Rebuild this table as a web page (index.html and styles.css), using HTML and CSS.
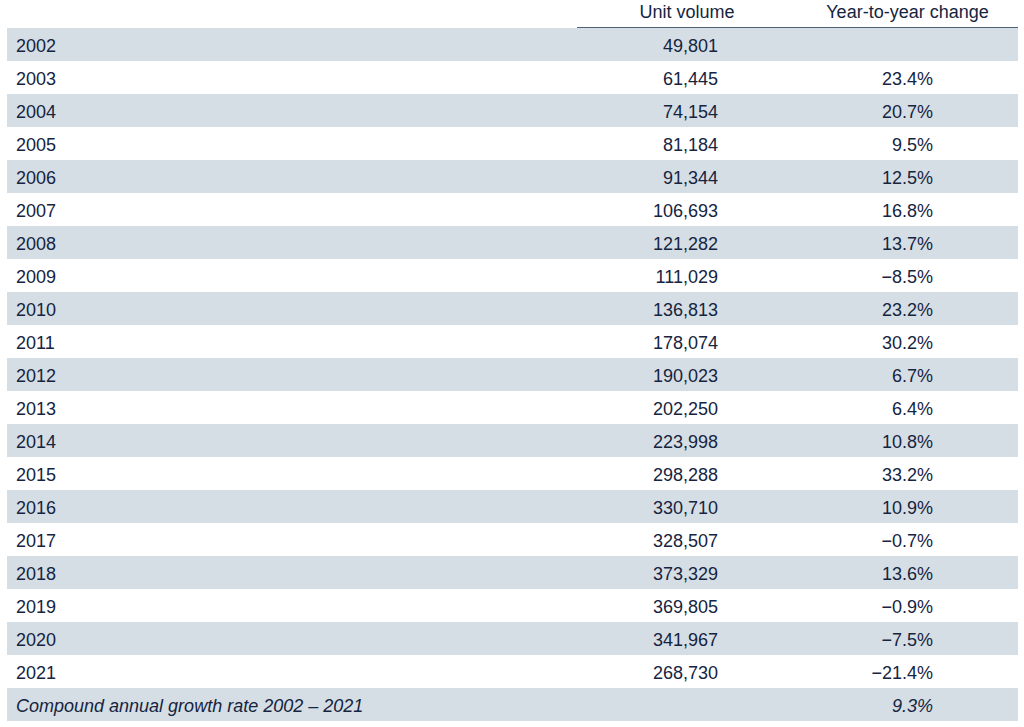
FILE: index.html
```html
<!DOCTYPE html>
<html lang="en">
<head>
<meta charset="utf-8">
<title>Unit volume</title>
<link rel="stylesheet" href="styles.css">
</head>
<body>
<table class="data">
  <colgroup>
    <col class="c-year">
    <col class="c-vol">
    <col class="c-chg">
  </colgroup>
  <thead>
    <tr>
      <th class="blank"></th>
      <th>Unit volume</th>
      <th>Year-to-year change</th>
    </tr>
  </thead>
  <tbody>
    <tr><td>2002</td><td class="vol">49,801</td><td class="chg"></td></tr>
    <tr><td>2003</td><td class="vol">61,445</td><td class="chg">23.4%</td></tr>
    <tr><td>2004</td><td class="vol">74,154</td><td class="chg">20.7%</td></tr>
    <tr><td>2005</td><td class="vol">81,184</td><td class="chg">9.5%</td></tr>
    <tr><td>2006</td><td class="vol">91,344</td><td class="chg">12.5%</td></tr>
    <tr><td>2007</td><td class="vol">106,693</td><td class="chg">16.8%</td></tr>
    <tr><td>2008</td><td class="vol">121,282</td><td class="chg">13.7%</td></tr>
    <tr><td>2009</td><td class="vol">111,029</td><td class="chg">&minus;8.5%</td></tr>
    <tr><td>2010</td><td class="vol">136,813</td><td class="chg">23.2%</td></tr>
    <tr><td>2011</td><td class="vol">178,074</td><td class="chg">30.2%</td></tr>
    <tr><td>2012</td><td class="vol">190,023</td><td class="chg">6.7%</td></tr>
    <tr><td>2013</td><td class="vol">202,250</td><td class="chg">6.4%</td></tr>
    <tr><td>2014</td><td class="vol">223,998</td><td class="chg">10.8%</td></tr>
    <tr><td>2015</td><td class="vol">298,288</td><td class="chg">33.2%</td></tr>
    <tr><td>2016</td><td class="vol">330,710</td><td class="chg">10.9%</td></tr>
    <tr><td>2017</td><td class="vol">328,507</td><td class="chg">&minus;0.7%</td></tr>
    <tr><td>2018</td><td class="vol">373,329</td><td class="chg">13.6%</td></tr>
    <tr><td>2019</td><td class="vol">369,805</td><td class="chg">&minus;0.9%</td></tr>
    <tr><td>2020</td><td class="vol">341,967</td><td class="chg">&minus;7.5%</td></tr>
    <tr><td>2021</td><td class="vol">268,730</td><td class="chg">&minus;21.4%</td></tr>
    <tr class="total"><td>Compound annual growth rate 2002 &ndash; 2021</td><td class="vol"></td><td class="chg">9.3%</td></tr>
  </tbody>
</table>
</body>
</html>
```

FILE: styles.css
```css
html, body {
  margin: 0;
  padding: 0;
  background: #ffffff;
}

body {
  font-family: "Liberation Sans", Arial, sans-serif;
  font-size: 18px;
  color: #15243f;
}

.data {
  border-collapse: collapse;
  border-spacing: 0;
  table-layout: fixed;
  width: 1011px;
  margin-left: 7px;
}

.c-year { width: 570px; }
.c-vol { width: 220px; }
.c-chg { width: 221px; }

.data th {
  font-weight: normal;
  text-align: center;
  padding: 2px 0 4px 0;
  line-height: 21px;
  border-bottom: 1px solid #4f6279;
}

.data th.blank {
  border-bottom: none;
}

.data td {
  height: 33px;
  box-sizing: border-box;
  padding: 3px 0 0 0;
  line-height: 30px;
  white-space: nowrap;
  vertical-align: top;
}

.data td:first-child {
  padding-left: 9px;
}

.data td.vol {
  text-align: right;
  padding-right: 79px;
}

.data td.chg {
  text-align: right;
  padding-right: 85px;
}

.data tbody tr:nth-child(odd) td {
  background: #d6dee5;
}

.data tr.total td {
  font-style: italic;
}
```
